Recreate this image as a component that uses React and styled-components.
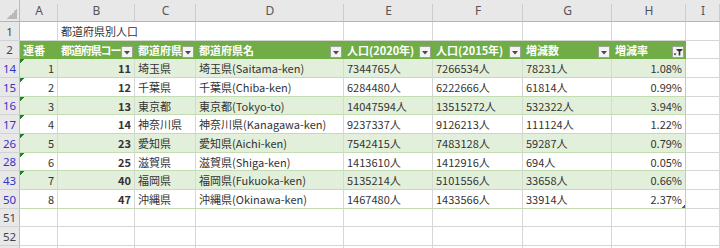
import React from "react";
import styled, { createGlobalStyle, css } from "styled-components";

const Global = createGlobalStyle`
  html, body { margin: 0; padding: 0; background: #fff; overflow: hidden; }
  #root { width: 720px; height: 248px; overflow: hidden; }
`;

const Sheet = styled.div`
  display: grid;
  grid-template-columns: 20px 38px 77px 61px 148px 89px 90px 89px 74px 34px;
  grid-template-rows: 22px 19px 18px 19px 19px 18px 19px 19px 18px 19px 19px 18px 19px 19px;
  width: 720px;
  height: 248px;
  overflow: hidden;
  font-family: "Noto Sans CJK JP", "Noto Sans", sans-serif;
  font-size: 11px;
  color: #333;
  background: #fff;
`;

const Corner = styled.div`
  box-sizing: border-box;
  background-color: #e8e8e8;
  border-right: 1px solid #bcbcbc;
  border-bottom: 1px solid #b4b4b4;
  background-image: linear-gradient(to top left, #b9b9b9 50%, transparent 50%);
  background-size: 10px 10px;
  background-position: right 2px bottom 2px;
  background-repeat: no-repeat;
`;

const ColHead = styled.div`
  box-sizing: border-box;
  display: flex;
  align-items: center;
  justify-content: center;
  font-family: "Noto Sans", "Liberation Sans", sans-serif;
  font-size: 12px;
  color: #555;
  border-bottom: 1px solid #b4b4b4;
  background:
    linear-gradient(#cdcdcd, #cdcdcd) right 0 bottom 0 / 1px 17px no-repeat,
    #e8e8e8;
`;

const RowHead = styled.div`
  box-sizing: border-box;
  display: flex;
  align-items: center;
  justify-content: center;
  font-family: "Noto Sans", "Liberation Sans", sans-serif;
  font-size: 11.5px;
  color: ${(p) => (p.$filtered ? "#3434c4" : "#444")};
  background: #e8e8e8;
  border-right: 1px solid #bcbcbc;
  border-bottom: 1px solid #d2d2d2;
`;

const kinds = {
  plain: { bg: "#fff", v: "#d6d6d6", h: "#d6d6d6" },
  head: { bg: "#70ad47", v: "#70ad47", h: "#70ad47" },
  band: { bg: "#e2efda", v: "#d3dccd", h: "#c3dcb1" },
  row: { bg: "#fff", v: "#d6d6d6", h: "#c3dcb1" },
};

const Cell = styled.div`
  box-sizing: border-box;
  min-width: 0;
  display: flex;
  align-items: center;
  justify-content: ${(p) => (p.$align === "right" ? "flex-end" : "flex-start")};
  padding: 0 3px;
  white-space: nowrap;
  overflow: hidden;
  font-weight: ${(p) => (p.$bold ? 700 : 400)};
  background-color: ${(p) => kinds[p.$kind || "plain"].bg};
  border-right: 1px solid
    ${(p) => (p.$edge ? "#b5d69f" : kinds[p.$kind || "plain"].v)};
  border-bottom: 1px solid ${(p) => kinds[p.$kind || "plain"].h};
  ${(p) => p.$span && css`grid-column: span ${p.$span};`}
  ${(p) =>
    p.$flag &&
    css`
      background-image: linear-gradient(135deg, #22822a 0 3.3px, transparent 3.3px);
      background-repeat: no-repeat;
    `}
  ${(p) =>
    p.$handle &&
    css`
      background-image: linear-gradient(315deg, #3d5f9e 0 2.2px, transparent 2.2px);
      background-repeat: no-repeat;
    `}
`;

const HeadCell = styled(Cell)`
  color: #fff;
  font-weight: 700;
  align-items: stretch;
  padding: 0 1px 0 3px;
`;

const HeadLabel = styled.span`
  flex: 1;
  min-width: 0;
  overflow: hidden;
  display: flex;
  align-items: center;
  letter-spacing: ${(p) => (p.$tight ? "-1.1px" : "0")};
`;

const FilterBtn = styled.span`
  flex: none;
  align-self: flex-end;
  box-sizing: border-box;
  width: 12px;
  height: 12px;
  border: 1px solid #9aa394;
  background: #f3f3f3;
  display: flex;
  align-items: center;
  justify-content: center;
`;

const DownIcon = () => (
  <svg width="10" height="10" viewBox="0 0 10 10">
    <path d="M2 4 L8 4 L5 7.5 Z" fill="#4a4a4a" />
  </svg>
);

const FunnelIcon = () => (
  <svg width="10" height="10" viewBox="0 0 10 10">
    <path d="M0.5 6.5 L3.5 6.5 L2 8.5 Z" fill="#333" />
    <path d="M3.5 2 L9.5 2 L9.5 3 L7.3 4.5 L7.3 8.5 L5.7 8.5 L5.7 4.5 L3.5 3 Z" fill="#333" />
  </svg>
);

const COLS = ["A", "B", "C", "D", "E", "F", "G", "H", "I"];

const headers = [
  { t: "連番", btn: false },
  { t: "都道府県コー", btn: true, tight: true },
  { t: "都道府県", btn: true },
  { t: "都道府県名", btn: true },
  { t: "人口(2020年)", btn: true },
  { t: "人口(2015年)", btn: true },
  { t: "増減数", btn: true },
  { t: "増減率", btn: true, active: true },
];

const data = [
  [14, 1, 11, "埼玉県", "埼玉県(Saitama-ken)", "7344765人", "7266534人", "78231人", "1.08%"],
  [15, 2, 12, "千葉県", "千葉県(Chiba-ken)", "6284480人", "6222666人", "61814人", "0.99%"],
  [16, 3, 13, "東京都", "東京都(Tokyo-to)", "14047594人", "13515272人", "532322人", "3.94%"],
  [17, 4, 14, "神奈川県", "神奈川県(Kanagawa-ken)", "9237337人", "9126213人", "111124人", "1.22%"],
  [26, 5, 23, "愛知県", "愛知県(Aichi-ken)", "7542415人", "7483128人", "59287人", "0.79%"],
  [28, 6, 25, "滋賀県", "滋賀県(Shiga-ken)", "1413610人", "1412916人", "694人", "0.05%"],
  [43, 7, 40, "福岡県", "福岡県(Fukuoka-ken)", "5135214人", "5101556人", "33658人", "0.66%"],
  [50, 8, 47, "沖縄県", "沖縄県(Okinawa-ken)", "1467480人", "1433566人", "33914人", "2.37%"],
];

const EmptyRow = ({ n }) => (
  <>
    <RowHead>{n}</RowHead>
    {COLS.map((c) => (
      <Cell key={c} />
    ))}
  </>
);

export default function App() {
  return (
    <>
      <Global />
      <Sheet>
        <Corner />
        {COLS.map((c) => (
          <ColHead key={c}>{c}</ColHead>
        ))}

        <RowHead>1</RowHead>
        <Cell />
        <Cell $span={2}>都道府県別人口</Cell>
        {COLS.slice(3).map((c) => (
          <Cell key={c} />
        ))}

        <RowHead>2</RowHead>
        {headers.map((h, i) => (
          <HeadCell key={i} $kind="head">
            <HeadLabel $tight={h.tight}>{h.t}</HeadLabel>
            {h.btn && (
              <FilterBtn>{h.active ? <FunnelIcon /> : <DownIcon />}</FilterBtn>
            )}
          </HeadCell>
        ))}
        <Cell />

        {data.map((r, i) => {
          const kind = i % 2 === 0 ? "band" : "row";
          const last = i === data.length - 1;
          return (
            <React.Fragment key={r[0]}>
              <RowHead $filtered>{r[0]}</RowHead>
              <Cell $kind={kind} $align="right" $flag={!last}>
                {r[1]}
              </Cell>
              <Cell $kind={kind} $align="right" $bold>
                {r[2]}
              </Cell>
              <Cell $kind={kind}>{r[3]}</Cell>
              <Cell $kind={kind}>{r[4]}</Cell>
              <Cell $kind={kind}>{r[5]}</Cell>
              <Cell $kind={kind}>{r[6]}</Cell>
              <Cell $kind={kind}>{r[7]}</Cell>
              <Cell $kind={kind} $align="right" $edge $handle={last}>
                {r[8]}
              </Cell>
              <Cell />
            </React.Fragment>
          );
        })}

        <EmptyRow n={51} />
        <EmptyRow n={52} />
        <EmptyRow n="" />
      </Sheet>
    </>
  );
}
